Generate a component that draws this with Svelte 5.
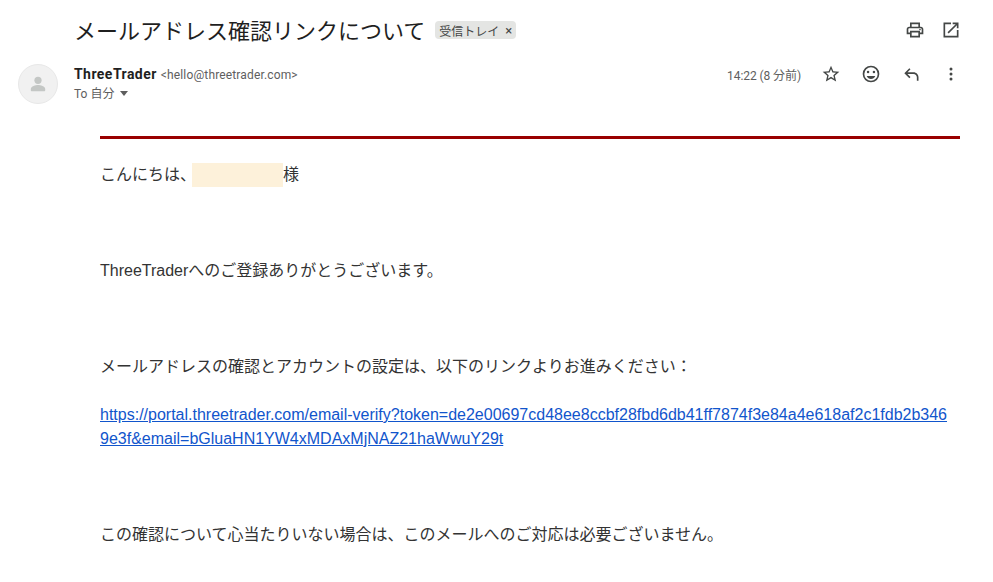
<script>
  const link = 'https://portal.threetrader.com/email-verify?token=de2e00697cd48ee8ccbf28fbd6db41ff7874f3e84a4e618af2c1fdb2b3469e3f&email=bGluaHN1YW4xMDAxMjNAZ21haWwuY29t';
</script>

<div class="mail">
  <header class="subject-row">
    <div class="subject">
      <h1>メールアドレス確認リンクについて</h1>
      <span class="tag">受信トレイ<span class="tag-x">×</span></span>
    </div>
    <div class="top-actions">
      <svg width="20" height="20" viewBox="0 0 24 24" fill="#444746"><path d="M19 8h-1V3H6v5H5c-1.7 0-3 1.3-3 3v6h4v4h12v-4h4v-6c0-1.7-1.3-3-3-3zM8 5h8v3H8V5zm8 14H8v-4h8v4zm4-4h-2v-2H6v2H4v-4c0-.6.4-1 1-1h14c.6 0 1 .4 1 1v4z"/><circle cx="18" cy="11.5" r="1"/></svg>
      <svg width="20" height="20" viewBox="0 0 24 24" fill="#444746"><path d="M19 19H5V5h7V3H3v18h18v-9h-2v7zM14 3v2h3.6l-9.8 9.8 1.4 1.4L19 6.4V10h2V3h-7z"/></svg>
    </div>
  </header>

  <div class="sender-row">
    <div class="avatar">
      <svg width="20" height="20" viewBox="0 0 20 20" fill="#c4c7c5"><circle cx="10" cy="6.3" r="3.6"/><path d="M2.8 16.5v-1.6c0-2.6 4.8-3.9 7.2-3.9s7.2 1.3 7.2 3.9v1.6c0 .4-.3.7-.7.7H3.500c-.4 0-.7-.3-.7-.7z"/></svg>
    </div>
    <div class="sender">
      <div class="from"><strong>ThreeTrader</strong> <span>&lt;hello@threetrader.com&gt;</span></div>
      <div class="to">To 自分 <i class="caret"></i></div>
    </div>
    <div class="meta">
      <span class="time">14:22 (8 分前)</span>
      <div class="actions">
        <svg width="20" height="20" viewBox="0 0 24 24" fill="#444746"><path d="M22 9.240l-7.190-.62L12 2 9.190 8.630 2 9.240l5.460 4.730L5.820 21 12 17.270 18.180 21l-1.630-7.030L22 9.240zM12 15.400l-3.760 2.270 1-4.280-3.320-2.880 4.380-.38L12 6.100l1.710 4.040 4.380.38-3.320 2.880 1 4.280L12 15.400z"/></svg>
        <svg width="20" height="20" viewBox="0 0 24 24" fill="#444746"><circle cx="15.500" cy="9.500" r="1.500"/><circle cx="8.500" cy="9.500" r="1.500"/><path d="M12 18c2.300 0 4.300-1.300 5.200-3.500H6.800C7.700 16.700 9.700 18 12 18zM12 2a10 10 0 1 0 0 20 10 10 0 0 0 0-20zm0 18a8 8 0 1 1 0-16 8 8 0 0 1 0 16z"/></svg>
        <svg width="20" height="20" viewBox="0 0 24 24" fill="#444746"><path d="M21 20h-2v-4c0-2.200-1.800-4-4-4H7.800l3.600 3.600L10 17 4 11l6-6 1.400 1.400L7.800 10H15c3.300 0 6 2.700 6 6v4z"/></svg>
        <svg width="20" height="20" viewBox="0 0 24 24" fill="#444746"><circle cx="12" cy="6" r="1.800"/><circle cx="12" cy="12" r="1.800"/><circle cx="12" cy="18" r="1.800"/></svg>
      </div>
    </div>
  </div>

  <main class="body">
    <hr />
    <p>こんにちは、<span class="mask"></span>様</p>
    <p class="gap">ThreeTraderへのご登録ありがとうございます。</p>
    <p class="gap">メールアドレスの確認とアカウントの設定は、以下のリンクよりお進みください：</p>
    <p class="link"><a href={link}>{link}</a></p>
    <p class="gap">この確認について心当たりいない場合は、このメールへのご対応は必要ございません。</p>
  </main>
</div>

<style>
  :global(body) { background: #fff; overflow: hidden; }
  .mail { height: 582px; overflow: hidden; font-family: Roboto, "Noto Sans CJK JP", sans-serif; color: #222; }
  .subject-row { display: flex; justify-content: space-between; align-items: center; padding: 14px 32px 0 74px; height: 32px; }
  .subject { display: flex; align-items: center; gap: 10px; }
  h1 { margin: -2px 0 0; font-size: 22px; font-weight: 400; line-height: 30px; color: #1f1f1f; font-family: "Noto Sans CJK JP", sans-serif; }
  .tag { display: inline-flex; align-items: center; height: 18px; padding: 0 4px; border-radius: 4px; background: #e4e5e3; font-size: 12px; color: #444746; }
  .tag-x { margin-left: 6px; font-size: 13px; }
  .top-actions { display: flex; gap: 16px; }
  .top-actions svg, .actions svg { display: block; }
  .sender-row { display: flex; align-items: flex-start; padding: 18px 32px 0 18px; }
  .avatar { width: 40px; height: 40px; border: 1px solid #e8e8e8; border-radius: 50%; background: #f1f1f1; display: flex; align-items: center; justify-content: center; margin-right: 16px; box-sizing: border-box; }
  .sender { flex: 1; }
  .from { font-size: 12px; line-height: 20px; color: #5e5e5e; }
  .from span { letter-spacing: .15px; margin-left: 1px; }
  .from strong { font-size: 14px; color: #1f1f1f; font-weight: 700; letter-spacing: .45px; }
  .to { font-size: 12px; line-height: 18px; color: #5e5e5e; }
  .caret { display: inline-block; margin-left: 3px; vertical-align: 2px; border: 4px solid transparent; border-top: 5px solid #5e5e5e; border-bottom: 0; }
  .meta { display: flex; align-items: center; height: 20px; }
  .time { font-size: 12px; color: #5e5e5e; margin-right: 20px; letter-spacing: -.08px; }
  .actions { display: flex; gap: 20px; }
  .body { margin: 32px 33px 0 100px; }
  hr { margin: 0; border: 0; height: 3px; background: #900; }
  p { margin: 0; font-family: "Liberation Sans", "Noto Sans CJK JP", sans-serif; font-size: 16px; line-height: 24px; color: #333; }
  hr + p { margin-top: 24px; }
  .gap { margin-top: 72px; }
  .link { margin-top: 24px; padding-right: 10px; word-break: break-all; }
  .link + .gap { margin-top: 72px; }
  a { color: #1155cc; }
  .mask { display: inline-block; width: 91px; height: 24px; margin-left: -4px; background: #fdf1da; vertical-align: top; }
</style>
